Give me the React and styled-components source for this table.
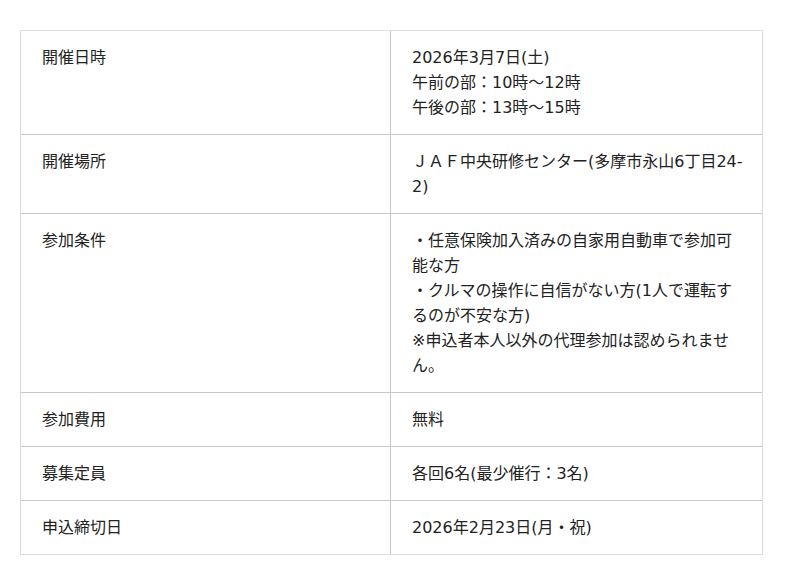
import styled, { createGlobalStyle } from 'styled-components';

const GlobalStyle = createGlobalStyle`
  body {
    margin: 0;
    background: #fff;
    font-family: "DejaVu Sans", "Noto Sans CJK JP", sans-serif;
    color: #222;
  }
`;

const rows = [
  {
    label: '開催日時',
    lines: ['2026年3月7日(土)', '午前の部：10時〜12時', '午後の部：13時〜15時'],
  },
  {
    label: '開催場所',
    lines: ['ＪＡＦ中央研修センター(多摩市永山6丁目24-2)'],
  },
  {
    label: '参加条件',
    lines: [
      '・任意保険加入済みの自家用自動車で参加可能な方',
      '・クルマの操作に自信がない方(1人で運転するのが不安な方)',
      '※申込者本人以外の代理参加は認められません。',
    ],
  },
  { label: '参加費用', lines: ['無料'] },
  { label: '募集定員', lines: ['各回6名(最少催行：3名)'] },
  { label: '申込締切日', lines: ['2026年2月23日(月・祝)'] },
];

export default function App() {
  return (
    <>
      <GlobalStyle />
      <Page>
        <Table>
          {rows.map((row, i) => (
            <Row key={row.label} $first={i === 0}>
              <Label>{row.label}</Label>
              <Value>
                {row.lines.map((line) => (
                  <Line key={line}>{line}</Line>
                ))}
              </Value>
            </Row>
          ))}
        </Table>
      </Page>
    </>
  );
}

const Page = styled.div`
  padding: 30px 20px;
`;

const Table = styled.div`
  width: 743px;
  box-sizing: border-box;
  border: 1px solid #dcdcdc;
  border-top-color: #e2e2e2;
`;

const Row = styled.div`
  display: grid;
  grid-template-columns: 370px 1fr;
  border-top: ${(p) => (p.$first ? 'none' : '1px solid #c8c8c8')};
`;

const Label = styled.div`
  box-sizing: border-box;
  padding: 14px 21px;
  border-right: 1px solid #c8c8c8;
  font-size: 16px;
  line-height: 25px;
`;

const Value = styled.div`
  padding: 14px 19px 14px 21px;
  font-size: 16px;
  line-height: 25px;
`;

const Line = styled.div``;
